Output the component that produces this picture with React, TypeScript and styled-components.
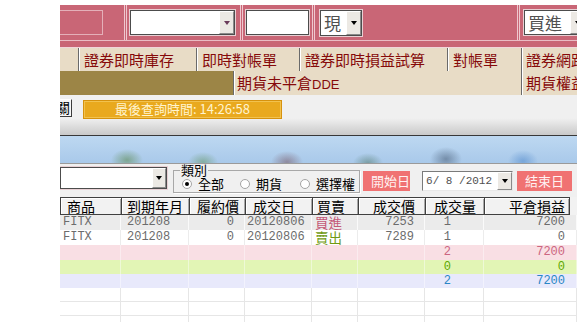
import React from "react";
import styled, { createGlobalStyle } from "styled-components";

const CJK = `"Noto Sans CJK TC", "Noto Sans CJK SC", sans-serif`;
const MONO = `"Liberation Mono", "Noto Sans CJK TC", monospace`;

const GlobalStyle = createGlobalStyle`
  html, body { margin: 0; padding: 0; background: #fff; }
  body { font-family: ${CJK}; }
  * { box-sizing: border-box; }
`;

const Page = styled.div`
  width: 584px;
  height: 322px;
  overflow: hidden;
  background: #fff;
`;

const Frame = styled.div`
  margin-left: 60px;
  width: 517px;
  height: 322px;
  padding-top: 5px;
  display: flex;
  flex-direction: column;
  overflow: hidden;
`;

/* ---------- pink toolbar ---------- */
const Toolbar = styled.div`
  flex: none;
  height: 36px;
  display: flex;
  background: #c96676;
  border-bottom: 1px solid #eabdc5;
`;

const ToolCell = styled.div<{ $w?: number; $pad: number }>`
  flex: ${(p) => (p.$w ? "none" : "1")};
  width: ${(p) => (p.$w ? `${p.$w}px` : "auto")};
  padding-left: ${(p) => p.$pad}px;
  display: flex;
  align-items: center;
  overflow: hidden;
`;

const ToolSep = styled.div`
  flex: none;
  width: 3px;
  border-left: 1px solid #efc8cf;
  border-right: 1px solid #efc8cf;
`;

const Band = styled.div`
  flex: none;
  height: 7px;
  background: #c96676;
  border-bottom: 1px solid #f1d6db;
`;

const GhostBox = styled.div`
  width: 43px;
  height: 25px;
  border: 1px solid #e4b0b9;
  border-left: none;
`;

const SelectBox = styled.div<{ $w: number; $h?: number }>`
  flex: none;
  width: ${(p) => p.$w}px;
  height: ${(p) => p.$h ?? 25}px;
  background: #fff;
  border: 1px solid #4c4c4c;
  box-shadow: 0 0 0 1px #e8d0d4;
  display: flex;
  align-items: stretch;
  justify-content: space-between;
  overflow: hidden;
`;

const SelectText = styled.span<{ $size?: number; $font?: string }>`
  flex: 1;
  padding-left: 3px;
  font-family: ${(p) => p.$font ?? CJK};
  font-size: ${(p) => p.$size ?? 17}px;
  line-height: 1;
  color: #505050;
  display: flex;
  align-items: center;
  white-space: nowrap;
  overflow: hidden;
`;

const DropBtn = styled.div<{ $w?: number }>`
  flex: none;
  width: ${(p) => p.$w ?? 15}px;
  background: #ece9e4;
  border: 1px solid;
  border-color: #fff #8a8a8a #8a8a8a #fff;
  display: flex;
  align-items: center;
  justify-content: center;
`;

const Arrow = styled.span<{ $color?: string }>`
  width: 0;
  height: 0;
  border-left: 3.5px solid transparent;
  border-right: 3.5px solid transparent;
  border-top: 4px solid ${(p) => p.$color ?? "#000"};
`;

/* ---------- tabs ---------- */
const TabRow = styled.div<{ $h: number }>`
  flex: none;
  height: ${(p) => p.$h}px;
  display: flex;
  background: #e8dcc6;
`;

const Tab = styled.div<{ $w?: number; $edge?: boolean; $pad?: number }>`
  flex: ${(p) => (p.$w ? "none" : "1")};
  width: ${(p) => (p.$w ? `${p.$w}px` : "auto")};
  border-left: ${(p) => (p.$edge ? "none" : "1px solid #6a6a6a")};
  box-shadow: ${(p) => (p.$edge ? "none" : "inset 1px 0 0 #fff")};
  padding-left: ${(p) => p.$pad ?? 5}px;
  font-size: 15px;
  line-height: 23px;
  color: #860a0a;
  white-space: nowrap;
  overflow: hidden;
`;

const Latin = styled.span`
  font-family: "Liberation Sans", sans-serif;
  font-size: 13px;
`;

const OliveBlock = styled.div<{ $w: number }>`
  flex: none;
  width: ${(p) => p.$w}px;
  background: #9c8546;
`;

/* ---------- status ---------- */
const Status = styled.div`
  flex: none;
  height: 41px;
  display: flex;
  align-items: flex-start;
  padding-top: 4px;
  background: linear-gradient(#f0f0f0 0, #f0f0f0 58%, #c9c9c9 100%);
  border-bottom: 1px solid #383838;
`;

const SideButton = styled.div`
  flex: none;
  width: 28px;
  height: 18px;
  margin-left: -16px;
  background: #f7f7f7;
  border: 1px solid;
  border-color: #fff #3c3c3c #3c3c3c #fff;
  font-size: 14px;
  line-height: 15px;
  text-align: right;
  padding-right: 1px;
  color: #000;
  overflow: hidden;
`;

const TimeLabel = styled.div`
  flex: none;
  width: 199px;
  height: 19px;
  margin: 1px 0 0 11px;
  background: #e9a91e;
  border: 1px solid #d6920e;
  box-shadow: inset 0 0 0 1px #f2c24e;
  color: #fff4cf;
  font-size: 13px;
  line-height: 16px;
  text-align: center;
  white-space: nowrap;
`;

/* ---------- banner ---------- */
const Banner = styled.div`
  flex: none;
  height: 28px;
  border-bottom: 1px solid #9a9a9a;
  background:
    radial-gradient(ellipse 16px 11px at 67px 24px, rgba(95, 140, 85, 0.6), rgba(95, 140, 85, 0)),
    radial-gradient(ellipse 15px 10px at 143px 26px, rgba(95, 145, 90, 0.5), rgba(95, 145, 90, 0)),
    radial-gradient(ellipse 16px 11px at 227px 26px, rgba(115, 75, 85, 0.5), rgba(115, 75, 85, 0)),
    radial-gradient(ellipse 15px 10px at 308px 27px, rgba(75, 115, 95, 0.5), rgba(75, 115, 95, 0)),
    radial-gradient(ellipse 16px 12px at 386px 23px, rgba(70, 90, 115, 0.55), rgba(70, 90, 115, 0)),
    radial-gradient(ellipse 15px 11px at 463px 25px, rgba(70, 130, 200, 0.5), rgba(70, 130, 200, 0)),
    linear-gradient(#bdd8f1, #a9c9ea);
`;

/* ---------- filter row ---------- */
const FilterRow = styled.div`
  flex: none;
  height: 33px;
  display: flex;
  align-items: flex-start;
  background: #f0f0f0;
  padding-top: 3px;
`;

const Group = styled.fieldset`
  flex: none;
  margin: -3px 0 0 6px;
  padding: 0 4px 0 6px;
  border: 1px solid #a8a8a8;
  box-shadow: 1px 1px 0 #fff;
  min-width: 0;
`;

const GroupLegend = styled.legend`
  font-size: 13px;
  line-height: 12px;
  padding: 0 1px;
  color: #000;
`;

const RadioRow = styled.div`
  display: flex;
  align-items: center;
  height: 16px;
  padding-left: 2px;
`;

const RadioItem = styled.label<{ $gap: number }>`
  display: flex;
  align-items: center;
  gap: 6px;
  margin-left: ${(p) => p.$gap}px;
  font-size: 13px;
  line-height: 14px;
  color: #000;
  white-space: nowrap;
`;

const RadioDot = styled.span<{ $on?: boolean }>`
  width: 10px;
  height: 10px;
  border-radius: 50%;
  background: #fff;
  border: 1px solid #a4a4a4;
  display: flex;
  align-items: center;
  justify-content: center;
  &::after {
    content: "";
    width: 4px;
    height: 4px;
    border-radius: 50%;
    background: ${(p) => (p.$on ? "#000" : "transparent")};
  }
`;

const RedLabel = styled.div<{ $w: number; $ml: number }>`
  flex: none;
  width: ${(p) => p.$w}px;
  height: 20px;
  margin: 4px 0 0 ${(p) => p.$ml}px;
  background: #f07272;
  color: #fff2f2;
  font-size: 13px;
  line-height: 20px;
  padding-left: 8px;
  white-space: nowrap;
`;

const DateBox = styled(SelectBox)`
  margin: 4px 0 0 12px;
  box-shadow: none;
  border-color: #7a7a7a #e8e8e8 #e8e8e8 #7a7a7a;
`;

/* ---------- table ---------- */
const HEAD_COLS = "61px 68px 56px 67px 46px 67px 59px 86px 1fr";
const BODY_COLS = "61px 68px 56px 67px 46px 67px 59px 1fr";

const HeadRow = styled.div`
  flex: none;
  height: 18px;
  display: grid;
  grid-template-columns: ${HEAD_COLS};
  background: #f2f2f2;
`;

const HeadCell = styled.div<{ $right?: boolean; $pad: number; $last?: boolean }>`
  border: 1px solid #404040;
  border-right: ${(p) => (p.$last ? "1px solid #404040" : "none")};
  box-shadow: inset 1px 1px 0 #fff, inset -1px 0 0 #a8a8a8;
  font-size: 14px;
  line-height: 16px;
  color: #000;
  text-align: ${(p) => (p.$right ? "right" : "left")};
  padding: ${(p) => (p.$right ? `0 ${p.$pad}px 0 0` : `0 0 0 ${p.$pad}px`)};
  white-space: nowrap;
  overflow: hidden;
`;

const HeadFill = styled.div`
  background: #f2f2f2;
`;

const BodyRow = styled.div<{ $bg: string; $h: number; $rule?: string }>`
  flex: none;
  height: ${(p) => p.$h}px;
  display: grid;
  grid-template-columns: ${BODY_COLS};
  background: ${(p) => p.$bg};
  border-bottom: ${(p) => (p.$rule ? `1px solid ${p.$rule}` : "none")};
  overflow: hidden;
`;

const Cell = styled.div<{ $right?: boolean; $pad: number; $line: string; $color?: string; $cjk?: boolean }>`
  border-right: 1px solid ${(p) => p.$line};
  font-family: ${(p) => (p.$cjk ? CJK : MONO)};
  font-size: ${(p) => (p.$cjk ? 13.5 : 12)}px;
  line-height: ${(p) => (p.$cjk ? "14px" : "15px")};
  color: ${(p) => p.$color ?? "#6c6c6c"};
  text-align: ${(p) => (p.$right ? "right" : "left")};
  padding: ${(p) => (p.$right ? `0 ${p.$pad}px 0 0` : `0 0 0 ${p.$pad}px`)};
  white-space: nowrap;
  overflow: hidden;
`;

const heads: { t: string; right?: boolean; pad: number }[] = [
  { t: "商品", pad: 6 },
  { t: "到期年月", pad: 5 },
  { t: "履約價", pad: 7 },
  { t: "成交日", pad: 7 },
  { t: "買賣", pad: 4 },
  { t: "成交價", right: true, pad: 10 },
  { t: "成交量", right: true, pad: 8 },
  { t: "平倉損益", right: true, pad: 4 },
];

const colSpec: { right?: boolean; pad: number; cjk?: boolean }[] = [
  { pad: 3 },
  { pad: 6 },
  { right: true, pad: 10 },
  { pad: 2 },
  { pad: 3, cjk: true },
  { right: true, pad: 10 },
  { right: true, pad: 32 },
  { right: true, pad: 11 },
];

type RowDef = { bg: string; h: number; line: string; color?: string; rule?: string; cells: { v: string; c?: string }[] };

const blank = (n: number) => Array.from({ length: n }, () => ({ v: "" }));

const rows: RowDef[] = [
  {
    bg: "#ebebeb", h: 15, line: "#fafafa",
    cells: [{ v: "FITX" }, { v: "201208" }, { v: "0" }, { v: "20120806" }, { v: "買進", c: "#c45a78" }, { v: "7253" }, { v: "1" }, { v: "7200" }],
  },
  {
    bg: "#ffffff", h: 15, line: "#ececec",
    cells: [{ v: "FITX" }, { v: "201208" }, { v: "0" }, { v: "20120806" }, { v: "賣出", c: "#6f9a12" }, { v: "7289" }, { v: "1" }, { v: "0" }],
  },
  { bg: "#f9dfe4", h: 15, line: "#fbecef", color: "#cc6680", cells: [...blank(6), { v: "2" }, { v: "7200" }] },
  { bg: "#e2f5b5", h: 14, line: "#eef9d6", color: "#5ea800", cells: [...blank(6), { v: "0" }, { v: "0" }] },
  { bg: "#e8e9fb", h: 14, line: "#f2f2fd", color: "#2a86c6", cells: [...blank(6), { v: "2" }, { v: "7200" }] },
  { bg: "#ffffff", h: 14, line: "#e6e6e6", rule: "#e6e6e6", cells: blank(8) },
  { bg: "#ffffff", h: 14, line: "#e6e6e6", rule: "#e6e6e6", cells: blank(8) },
  { bg: "#ffffff", h: 14, line: "#e6e6e6", rule: "#e6e6e6", cells: blank(8) },
];

export default function App() {
  return (
    <Page>
      <GlobalStyle />
      <Frame>
        <Toolbar>
          <ToolCell $w={64} $pad={0}>
            <GhostBox />
          </ToolCell>
          <ToolSep />
          <ToolCell $w={113} $pad={3}>
            <SelectBox $w={105}>
              <SelectText />
              <DropBtn>
                <Arrow $color="#6a3a5a" />
              </DropBtn>
            </SelectBox>
          </ToolCell>
          <ToolSep />
          <ToolCell $w={69} $pad={3}>
            <SelectBox $w={63} />
          </ToolCell>
          <ToolSep />
          <ToolCell $w={202} $pad={5}>
            <SelectBox $w={42} $h={26}>
              <SelectText>現</SelectText>
              <DropBtn>
                <Arrow />
              </DropBtn>
            </SelectBox>
          </ToolCell>
          <ToolSep />
          <ToolCell $pad={4}>
            <SelectBox $w={62}>
              <SelectText>買進</SelectText>
              <DropBtn>
                <Arrow />
              </DropBtn>
            </SelectBox>
          </ToolCell>
        </Toolbar>
        <Band />

        <TabRow $h={23}>
          <Tab $w={18} $edge />
          <Tab $w={118}>證券即時庫存</Tab>
          <Tab $w={103}>即時對帳單</Tab>
          <Tab $w={148}>證券即時損益試算</Tab>
          <Tab $w={74}>對帳單</Tab>
          <Tab $pad={4}>證券網路下單</Tab>
        </TabRow>
        <TabRow $h={24}>
          <OliveBlock $w={173} />
          <Tab $w={288} $pad={3}>
            期貨未平倉<Latin>DDE</Latin>
          </Tab>
          <Tab $pad={4}>期貨權益數</Tab>
        </TabRow>

        <Status>
          <SideButton>關</SideButton>
          <TimeLabel>最後查詢時間: 14:26:58</TimeLabel>
        </Status>

        <Banner />

        <FilterRow>
          <SelectBox $w={107} $h={22}>
            <SelectText />
            <DropBtn $w={14}>
              <Arrow />
            </DropBtn>
          </SelectBox>
          <Group>
            <GroupLegend>類別</GroupLegend>
            <RadioRow>
              <RadioItem $gap={0}>
                <RadioDot $on />
                全部
              </RadioItem>
              <RadioItem $gap={16}>
                <RadioDot />
                期貨
              </RadioItem>
              <RadioItem $gap={18}>
                <RadioDot />
                選擇權
              </RadioItem>
            </RadioRow>
          </Group>
          <RedLabel $w={47} $ml={3}>開始日</RedLabel>
          <DateBox $w={91} $h={20}>
            <SelectText $size={11} $font={MONO}>6/ 8 /2012</SelectText>
            <DropBtn>
              <Arrow />
            </DropBtn>
          </DateBox>
          <RedLabel $w={55} $ml={4}>結束日</RedLabel>
        </FilterRow>

        <HeadRow>
          {heads.map((h, i) => (
            <HeadCell key={h.t} $right={h.right} $pad={h.pad} $last={i === heads.length - 1}>
              {h.t}
            </HeadCell>
          ))}
          <HeadFill />
        </HeadRow>

        {rows.map((r, ri) => (
          <BodyRow key={ri} $bg={r.bg} $h={r.h} $rule={r.rule}>
            {r.cells.map((c, ci) => (
              <Cell
                key={ci}
                $right={colSpec[ci].right}
                $pad={colSpec[ci].pad}
                $cjk={colSpec[ci].cjk}
                $line={r.line}
                $color={c.c ?? r.color}
              >
                {c.v}
              </Cell>
            ))}
          </BodyRow>
        ))}
      </Frame>
    </Page>
  );
}
